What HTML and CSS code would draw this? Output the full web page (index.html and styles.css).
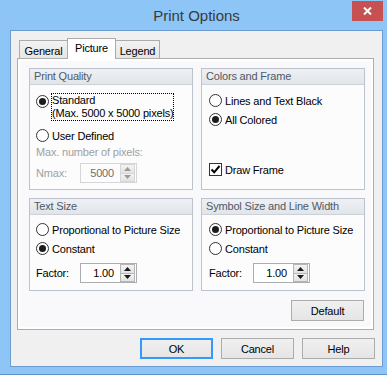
FILE: index.html
```html
<!DOCTYPE html>
<html lang="en">
<head>
  <meta charset="UTF-8">
  <title>Print Options</title>
  <link rel="stylesheet" href="styles.css">
</head>
<body>
  <div class="window">
    <div class="titlebar">
      <span class="title">Print Options</span>
      <div class="close">
        <svg width="9" height="8" viewBox="0 0 9 8"><path d="M1 0.5 L8 7.5 M8 0.5 L1 7.5" stroke="#fff" stroke-width="2"/></svg>
      </div>
    </div>

    <div class="client">
      <div class="tabs">
        <div class="tab tab-general">General</div>
        <div class="tab tab-picture active">Picture</div>
        <div class="tab tab-legend">Legend</div>
      </div>

      <div class="panel">
        <div class="groups">
          <!-- print quality -->
          <div class="group">
            <div class="group-head">Print Quality</div>
            <div class="group-body quality">
              <div class="opt multi">
                <span class="radio on"></span>
                <span class="focus">Standard<br>(Max. 5000 x 5000 pixels)</span>
              </div>
              <div class="opt user-def">
                <span class="radio"></span>
                <span>User Defined</span>
              </div>
              <div class="muted max-label">Max. number of pixels:</div>
              <div class="field nmax-row">
                <span class="field-label muted">Nmax:</span>
                <div class="spin disabled">
                  <span class="spin-val">5000</span>
                  <div class="spin-btns">
                    <span class="spin-up"><svg width="7" height="4" viewBox="0 0 7 4"><polygon points="0,4 3.5,0 7,4"/></svg></span>
                    <span class="spin-down"><svg width="7" height="4" viewBox="0 0 7 4"><polygon points="0,0 7,0 3.5,4"/></svg></span>
                  </div>
                </div>
              </div>
            </div>
          </div>

          <!-- colors and frame -->
          <div class="group">
            <div class="group-head">Colors and Frame</div>
            <div class="group-body colors">
              <div class="opt">
                <span class="radio"></span>
                <span>Lines and Text Black</span>
              </div>
              <div class="opt">
                <span class="radio on"></span>
                <span>All Colored</span>
              </div>
              <div class="opt frame-row">
                <span class="check">
                  <svg width="11" height="11" viewBox="0 0 11 11"><path d="M1.5 5.5 L4.2 8.3 L9.5 2" fill="none" stroke="#000" stroke-width="2"/></svg>
                </span>
                <span>Draw Frame</span>
              </div>
            </div>
          </div>

          <!-- text size -->
          <div class="group">
            <div class="group-head">Text Size</div>
            <div class="group-body sizes">
              <div class="opt">
                <span class="radio"></span>
                <span>Proportional to Picture Size</span>
              </div>
              <div class="opt">
                <span class="radio on"></span>
                <span>Constant</span>
              </div>
              <div class="field factor-row">
                <span class="field-label">Factor:</span>
                <div class="spin">
                  <span class="spin-val">1.00</span>
                  <div class="spin-btns">
                    <span class="spin-up"><svg width="7" height="4" viewBox="0 0 7 4"><polygon points="0,4 3.5,0 7,4"/></svg></span>
                    <span class="spin-down"><svg width="7" height="4" viewBox="0 0 7 4"><polygon points="0,0 7,0 3.5,4"/></svg></span>
                  </div>
                </div>
              </div>
            </div>
          </div>

          <!-- symbol size -->
          <div class="group">
            <div class="group-head">Symbol Size and Line Width</div>
            <div class="group-body sizes">
              <div class="opt">
                <span class="radio on"></span>
                <span>Proportional to Picture Size</span>
              </div>
              <div class="opt">
                <span class="radio"></span>
                <span>Constant</span>
              </div>
              <div class="field factor-row">
                <span class="field-label">Factor:</span>
                <div class="spin">
                  <span class="spin-val">1.00</span>
                  <div class="spin-btns">
                    <span class="spin-up"><svg width="7" height="4" viewBox="0 0 7 4"><polygon points="0,4 3.5,0 7,4"/></svg></span>
                    <span class="spin-down"><svg width="7" height="4" viewBox="0 0 7 4"><polygon points="0,0 7,0 3.5,4"/></svg></span>
                  </div>
                </div>
              </div>
            </div>
          </div>
        </div>

        <div class="panel-foot">
          <button class="btn">Default</button>
        </div>
      </div>

      <div class="actions">
        <button class="btn default">OK</button>
        <button class="btn">Cancel</button>
        <button class="btn">Help</button>
      </div>
    </div>
  </div>
</body>
</html>
```

FILE: styles.css
```css
body {
  margin: 0;
  width: 387px;
  height: 375px;
  overflow: hidden;
  background: #8cc5f6;
  font-family: "Liberation Sans", Arial, sans-serif;
  font-size: 11px;
  letter-spacing: -0.18px;
  color: #000;
}

.window {
  position: relative;
  width: 393px;
  height: 375px;
  box-sizing: border-box;
  padding: 0 10px;
  background: #8cc5f6;
  border-bottom: 1px solid #5f93c9;
}

.titlebar {
  height: 30px;
  display: flex;
  align-items: center;
  justify-content: center;
}

.title {
  font-size: 15px;
  letter-spacing: 0;
  color: #3a3a3a;
  padding-top: 1px;
}

.close {
  position: absolute;
  top: 1px;
  right: 10px;
  width: 31px;
  height: 20px;
  background: #c75050;
  display: flex;
  align-items: center;
  justify-content: center;
}

.client {
  height: 337px;
  box-sizing: border-box;
  border: 1px solid #6c9dd1;
  background: #f0f0f0;
  padding: 7px 7px 0 6px;
  display: flex;
  flex-direction: column;
}

/* tabs */
.tabs {
  display: flex;
  align-items: flex-end;
  height: 20px;
  padding-left: 2px;
}

.tab {
  height: 18px;
  box-sizing: border-box;
  border: 1px solid #acacac;
  border-bottom: 0;
  background: linear-gradient(#f2f2f2, #e6e6e6);
  display: flex;
  align-items: center;
  justify-content: center;
  padding-top: 2px;
  margin-left: -1px;
}

.tab-general { width: 49px; margin-left: 0; }
.tab-picture { width: 49px; }
.tab-legend { width: 45px; }

.tab.active {
  height: 21px;
  margin-bottom: -1px;
  background: #fff;
  position: relative;
  z-index: 1;
  padding-top: 0;
  padding-bottom: 3px;
}

.panel {
  width: 357px;
  height: 272px;
  box-sizing: border-box;
  border: 1px solid #adadad;
  background: #f9f9fb;
  box-shadow: inset 0 0 0 2px #fff;
  padding: 9px 8px 0 11px;
}

.groups {
  display: grid;
  grid-template-columns: 164px 164px;
  grid-template-rows: 122px 93px;
  gap: 8px;
}

.group {
  border: 1px solid #bcc3cd;
  background: #fcfcfd;
  display: flex;
  flex-direction: column;
}

.group-head {
  height: 15px;
  line-height: 15px;
  padding-left: 4px;
  background: linear-gradient(#eef0f4, #e1e5ea);
  border-bottom: 1px solid #ccd1d8;
  color: #4f5966;
}

.group-body {
  display: flex;
  flex-direction: column;
  padding-left: 6px;
}

.group:nth-child(even) .group-body {
  padding-left: 7px;
}

.quality { padding-top: 8px; }
.colors { padding-top: 6px; }
.sizes { padding-top: 5px; }

.opt {
  display: flex;
  align-items: center;
  gap: 3px;
  height: 19px;
}

.opt.multi {
  height: auto;
  align-items: flex-start;
  gap: 2px;
}

.opt.multi .radio {
  margin-top: 2px;
}

.focus {
  border: 1px dotted #000;
  line-height: 13px;
}

.user-def { margin-top: 5px; }

.muted { color: #a0a0a0; }

.max-label {
  line-height: 13px;
  margin-top: 1px;
}

.frame-row { margin-top: 31px; }

.radio {
  width: 13px;
  height: 13px;
  box-sizing: border-box;
  border: 1px solid #333;
  border-radius: 50%;
  background: #fff;
  display: flex;
  align-items: center;
  justify-content: center;
  flex-shrink: 0;
}

.radio.on::after {
  content: '';
  width: 7px;
  height: 7px;
  border-radius: 50%;
  background: #1c1c1c;
}

.check {
  width: 13px;
  height: 13px;
  box-sizing: border-box;
  border: 1px solid #333;
  background: #fff;
  display: flex;
  align-items: center;
  justify-content: center;
  flex-shrink: 0;
}

/* number fields */
.field {
  display: flex;
  align-items: center;
}

.nmax-row { margin-top: 4px; }
.factor-row { margin-top: 5px; }

.field-label {
  width: 44px;
}

.spin {
  width: 57px;
  height: 20px;
  box-sizing: border-box;
  border: 1px solid #abadb3;
  background: #fff;
  display: flex;
}

.spin-val {
  flex: 1;
  text-align: right;
  padding-right: 6px;
  line-height: 18px;
}

.spin-btns {
  width: 15px;
  margin: 0 1px 0 0;
  display: flex;
  flex-direction: column;
  border: 1px solid #b5b5b5;
  box-sizing: border-box;
}

.spin-btns span {
  flex: 1;
  display: flex;
  align-items: center;
  justify-content: center;
  background: linear-gradient(#f3f3f3, #e3e3e3);
}

.spin-up {
  border-bottom: 1px solid #b5b5b5;
}

.spin svg polygon { fill: #1a1a1a; }

.spin.disabled {
  border-color: #d6d6d6;
  background: #fcfcfd;
}

.spin.disabled .spin-val { color: #6d6d6d; }

.spin.disabled .spin-btns { border-color: #d6d6d6; }
.spin.disabled .spin-up { border-bottom-color: #d6d6d6; }
.spin.disabled svg polygon { fill: #9a9a9a; }

/* buttons */
.panel-foot {
  display: flex;
  justify-content: flex-end;
  margin-top: 9px;
  padding-right: 1px;
}

.btn {
  width: 73px;
  height: 21px;
  box-sizing: border-box;
  border: 1px solid #acacac;
  background: linear-gradient(#f0f0f0, #e5e5e5);
  font-family: inherit;
  font-size: 11px;
  letter-spacing: inherit;
  color: #000;
  padding: 0;
  margin: 0;
}

.btn.default {
  border-color: #3399ff;
  box-shadow: inset 0 0 0 1px #3399ff;
}

.actions {
  display: flex;
  justify-content: flex-end;
  gap: 8px;
  margin-top: 8px;
}
```
